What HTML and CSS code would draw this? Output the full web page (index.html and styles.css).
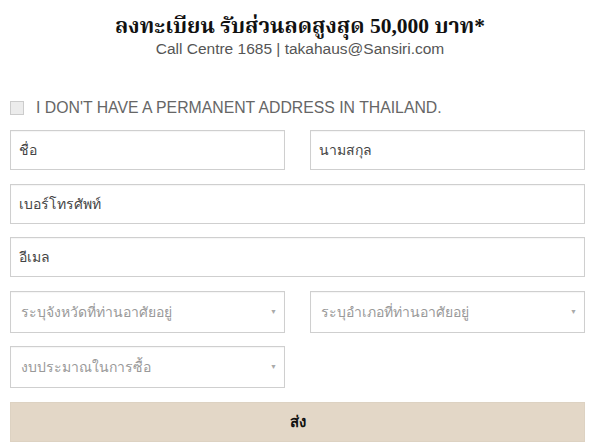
FILE: index.html
```html
<!DOCTYPE html>
<html lang="th">
<head>
    <meta charset="UTF-8">
    <meta name="viewport" content="width=device-width, initial-scale=1.0">
    <title>ลงทะเบียน</title>
    <link rel="stylesheet" href="styles.css">
</head>
<body>

    <div class="register-head">
        <h1>ลงทะเบียน รับส่วนลดสูงสุด 50,000 บาท*</h1>
        <p>Call Centre 1685 | takahaus@Sansiri.com</p>
    </div>

    <form class="register-form">
        <label class="foreign-check">
            <span class="box"></span>
            I DON'T HAVE A PERMANENT ADDRESS IN THAILAND.
        </label>

        <div class="row two">
            <div class="field">ชื่อ</div>
            <div class="field">นามสกุล</div>
        </div>
        <div class="row">
            <div class="field">เบอร์โทรศัพท์</div>
        </div>
        <div class="row">
            <div class="field">อีเมล</div>
        </div>
        <div class="row two">
            <div class="field select">ระบุจังหวัดที่ท่านอาศัยอยู่<span class="arrow">▼</span></div>
            <div class="field select">ระบุอำเภอที่ท่านอาศัยอยู่<span class="arrow">▼</span></div>
        </div>
        <div class="row two">
            <div class="field select">งบประมาณในการซื้อ<span class="arrow">▼</span></div>
        </div>
        <div class="submit">ส่ง</div>
    </form>

</body>
</html>
```

FILE: styles.css
```css
body {
    margin: 0;
    font-family: "Liberation Sans", Arial, sans-serif;
    color: #333;
    background: #fff;
}
.register-head {
    text-align: center;
    padding-top: 12px;
}
.register-head h1 {
    margin: 0;
    font-family: "Liberation Serif", "Noto Serif Thai", serif;
    font-size: 21.5px;
    line-height: 28px;
    font-weight: bold;
    color: #111;
}
.register-head p {
    margin: 0;
    font-size: 15.5px;
    line-height: 18px;
    color: #555;
}
.register-form {
    display: flex;
    flex-direction: column;
    gap: 13.5px;
    padding: 42px 15px 0 10px;
}
.foreign-check {
    display: flex;
    align-items: center;
    gap: 12px;
    height: 16px;
    font-size: 15.8px;
    color: #666;
    margin-bottom: 0.5px;
}
.foreign-check .box {
    width: 12px;
    height: 12px;
    border: 1px solid #ccc;
    background: #ececec;
}
.row {
    display: grid;
    grid-template-columns: 1fr;
}
.row.two {
    grid-template-columns: 1fr 1fr;
    gap: 25px;
}
.field {
    position: relative;
    height: 38px;
    border: 1px solid #cfcfcf;
    box-shadow: inset 0 1px 1px rgba(0, 0, 0, 0.04);
    padding: 0 8px;
    display: flex;
    align-items: center;
    font-size: 14px;
    color: #444;
}
.field.select {
    height: 40px;
    color: #999;
    padding-left: 10px;
}
.field .arrow {
    position: absolute;
    right: 7px;
    top: 16px;
    font-size: 7px;
    color: #aaa;
}
.submit {
    height: 38px;
    background: #e3d7c7;
    border: 1px solid #ddd2c2;
    display: flex;
    align-items: center;
    justify-content: center;
    font-size: 15px;
    font-weight: bold;
    color: #111;
}
```
